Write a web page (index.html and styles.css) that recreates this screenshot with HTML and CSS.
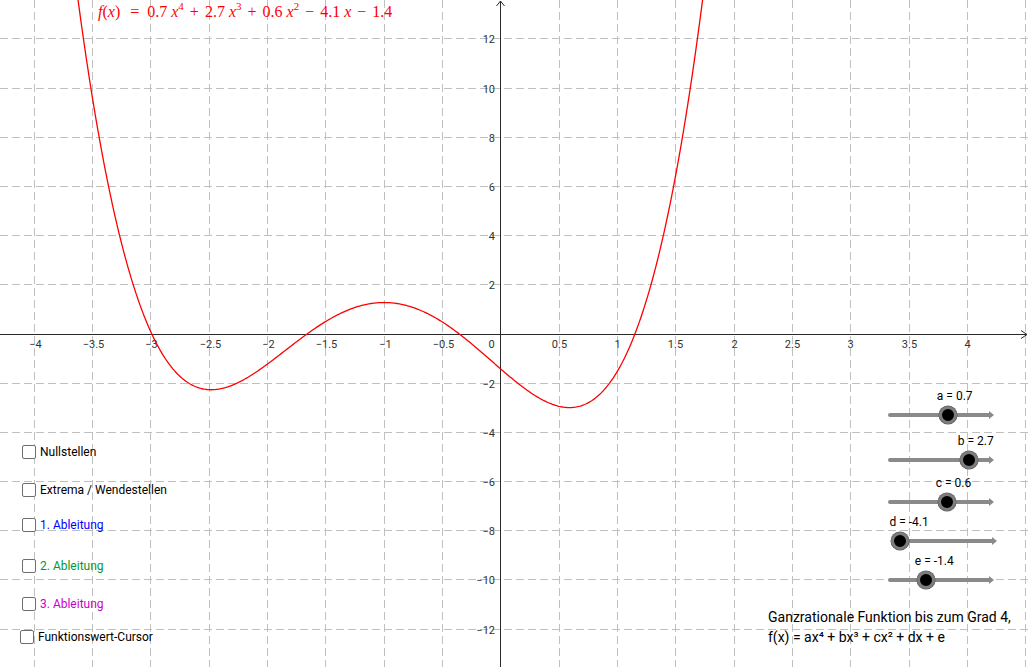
FILE: index.html
```html
<!DOCTYPE html>
<html lang="de">
<head>
<meta charset="utf-8">
<title>Ganzrationale Funktion</title>
<link rel="stylesheet" href="styles.css">
</head>
<body>
<div class="applet">
  <svg class="graph" width="1030" height="667" viewBox="0 0 1030 667">
    <g class="grid">
      <line x1="34.5" y1="0" x2="34.5" y2="667"/>
      <line x1="92.5" y1="0" x2="92.5" y2="667"/>
      <line x1="150.5" y1="0" x2="150.5" y2="667"/>
      <line x1="209.5" y1="0" x2="209.5" y2="667"/>
      <line x1="267.5" y1="0" x2="267.5" y2="667"/>
      <line x1="325.5" y1="0" x2="325.5" y2="667"/>
      <line x1="384.5" y1="0" x2="384.5" y2="667"/>
      <line x1="442.5" y1="0" x2="442.5" y2="667"/>
      <line x1="559.5" y1="0" x2="559.5" y2="667"/>
      <line x1="617.5" y1="0" x2="617.5" y2="667"/>
      <line x1="675.5" y1="0" x2="675.5" y2="667"/>
      <line x1="734.5" y1="0" x2="734.5" y2="667"/>
      <line x1="792.5" y1="0" x2="792.5" y2="667"/>
      <line x1="850.5" y1="0" x2="850.5" y2="667"/>
      <line x1="909.5" y1="0" x2="909.5" y2="667"/>
      <line x1="967.5" y1="0" x2="967.5" y2="667"/>
      <line x1="1025.5" y1="0" x2="1025.5" y2="667"/>
      <line x1="0" y1="38.5" x2="1030" y2="38.5"/>
      <line x1="0" y1="88.5" x2="1030" y2="88.5"/>
      <line x1="0" y1="137.5" x2="1030" y2="137.5"/>
      <line x1="0" y1="186.5" x2="1030" y2="186.5"/>
      <line x1="0" y1="235.5" x2="1030" y2="235.5"/>
      <line x1="0" y1="284.5" x2="1030" y2="284.5"/>
      <line x1="0" y1="383.5" x2="1030" y2="383.5"/>
      <line x1="0" y1="432.5" x2="1030" y2="432.5"/>
      <line x1="0" y1="481.5" x2="1030" y2="481.5"/>
      <line x1="0" y1="530.5" x2="1030" y2="530.5"/>
      <line x1="0" y1="579.5" x2="1030" y2="579.5"/>
      <line x1="0" y1="629.5" x2="1030" y2="629.5"/>
    </g>
    <g class="axes">
      <line x1="0" y1="334.5" x2="1027" y2="334.5"/>
      <polyline points="1021,330.5 1027,334.5 1021,338.5"/>
      <line x1="500.5" y1="667" x2="500.5" y2="1"/>
      <polyline points="496.5,6 500.5,1 504.5,6"/>
    </g>
    <g class="labels-x">
      <text x="35.5" y="348">−4</text>
      <text x="93.5" y="348">−3.5</text>
      <text x="151.5" y="348">−3</text>
      <text x="210.5" y="348">−2.5</text>
      <text x="268.5" y="348">−2</text>
      <text x="326.5" y="348">−1.5</text>
      <text x="385.5" y="348">−1</text>
      <text x="443.5" y="348">−0.5</text>
      <text x="491.5" y="348">0</text>
      <text x="559.5" y="348">0.5</text>
      <text x="617.5" y="348">1</text>
      <text x="675.5" y="348">1.5</text>
      <text x="734.5" y="348">2</text>
      <text x="792.5" y="348">2.5</text>
      <text x="850.5" y="348">3</text>
      <text x="909.5" y="348">3.5</text>
      <text x="967.5" y="348">4</text>
    </g>
    <g class="labels-y">
      <text x="495" y="42.5">12</text>
      <text x="495" y="92.5">10</text>
      <text x="495" y="141.5">8</text>
      <text x="495" y="190.5">6</text>
      <text x="495" y="239.5">4</text>
      <text x="495" y="288.5">2</text>
      <text x="495" y="387.5">−2</text>
      <text x="495" y="436.5">−4</text>
      <text x="495" y="485.5">−6</text>
      <text x="495" y="534.5">−8</text>
      <text x="495" y="583.5">−10</text>
      <text x="495" y="633.5">−12</text>
    </g>
    <path id="curve" class="curve" d=""/>
  </svg>

  <div class="formula"><i>f</i>(<i>x</i>)<span class="op op-eq">=</span>0.7 <i>x</i><sup>4</sup><span class="op">+</span>2.7 <i>x</i><sup>3</sup><span class="op">+</span>0.6 <i>x</i><sup>2</sup><span class="op">−</span>4.1 <i>x</i><span class="op">−</span>1.4</div>

  <ul class="toggles">
    <li class="toggle"><span class="box"></span><span>Nullstellen</span></li>
    <li class="toggle toggle-2"><span class="box"></span><span>Extrema / Wendestellen</span></li>
    <li class="toggle toggle-3 blue"><span class="box"></span><span>1. Ableitung</span></li>
    <li class="toggle toggle-4 green"><span class="box"></span><span>2. Ableitung</span></li>
    <li class="toggle toggle-5 magenta"><span class="box"></span><span>3. Ableitung</span></li>
    <li class="toggle toggle-6"><span class="box"></span><span>Funktionswert-Cursor</span></li>
  </ul>

  <div class="sliders">
    <div class="slider" style="--p:0.57"><span class="slider-label">a = 0.7</span><div class="track-wrap"><span class="track"></span><span class="knob"></span></div></div>
    <div class="slider slider-b" style="--p:0.77"><span class="slider-label">b = 2.7</span><div class="track-wrap"><span class="track"></span><span class="knob"></span></div></div>
    <div class="slider slider-c" style="--p:0.56"><span class="slider-label">c = 0.6</span><div class="track-wrap"><span class="track"></span><span class="knob"></span></div></div>
    <div class="slider slider-d" style="--p:0.09"><span class="slider-label">d = -4.1</span><div class="track-wrap"><span class="track"></span><span class="knob"></span></div></div>
    <div class="slider slider-e" style="--p:0.36"><span class="slider-label">e = -1.4</span><div class="track-wrap"><span class="track"></span><span class="knob"></span></div></div>
  </div>

  <p class="caption">Ganzrationale Funktion bis zum Grad 4,<br>f(x) = ax⁴ + bx³ + cx² + dx + e</p>
</div>
<script src="script.js"></script>
</body>
</html>
```

FILE: styles.css
```css
html, body {
  margin: 0;
  padding: 0;
  background: #ffffff;
}

.applet {
  position: relative;
  width: 1030px;
  height: 667px;
  overflow: hidden;
  background: #ffffff;
  font-family: Roboto, "Liberation Sans", sans-serif;
  color: #000;
}

.graph {
  display: block;
}

.grid line {
  stroke: #c0c0c0;
  stroke-width: 1;
  stroke-dasharray: 8 4;
}

.axes line,
.axes polyline {
  stroke: #2a2a2a;
  stroke-width: 1;
  fill: none;
}

.labels-x text,
.labels-y text {
  font-family: Roboto, "Liberation Sans", sans-serif;
  font-size: 11px;
  fill: #333333;
}

.labels-x text {
  text-anchor: middle;
}

.labels-y text {
  text-anchor: end;
}

.curve {
  fill: none;
  stroke: #ff0000;
  stroke-width: 1.3;
  stroke-linejoin: round;
}

/* Function label */
.formula {
  position: absolute;
  left: 98px;
  top: 1px;
  font-family: "Liberation Serif", "DejaVu Serif", serif;
  font-size: 16px;
  line-height: 22px;
  color: #ff0000;
  white-space: nowrap;
}

.formula sup {
  font-size: 11px;
  line-height: 0;
  vertical-align: 7px;
}

.formula .op {
  margin: 0 6px;
}

.formula .op-eq {
  margin: 0 8px 0 10px;
}

/* Check boxes */
.toggles {
  position: absolute;
  left: 22px;
  top: 442px;
  margin: 0;
  padding: 0;
  list-style: none;
  display: flex;
  flex-direction: column;
  font-size: 12px;
}

.toggle {
  display: flex;
  align-items: center;
  gap: 4px;
  height: 20px;
  white-space: nowrap;
}

.toggle-2 { margin-top: 18px; }
.toggle-3 { margin-top: 15px; }
.toggle-4 { margin-top: 21px; }
.toggle-5 { margin-top: 18px; }
.toggle-6 { margin-top: 13px; margin-left: -2px; }

.box {
  width: 14px;
  height: 14px;
  box-sizing: border-box;
  border: 1.5px solid #6e6e6e;
  border-radius: 2px;
  background: #ffffff;
  flex: none;
}

.blue { color: #0000ff; }
.green { color: #009933; }
.magenta { color: #cc00cc; }

/* Sliders */
.sliders {
  position: absolute;
  left: 888px;
  top: 389px;
  width: 130px;
  display: flex;
  flex-direction: column;
}

.slider {
  display: flex;
  flex-direction: column;
  height: 35px;
}

.slider-b { margin-top: 10px; }
.slider-c { margin-top: 7px; }
.slider-d { margin-top: 4px; margin-left: 3px; }
.slider-e { margin-top: 4px; }

.slider-label {
  display: block;
  margin-left: calc(var(--p) * 105px - 11px);
  font-size: 12px;
  line-height: 14px;
  white-space: nowrap;
}

.track-wrap {
  position: relative;
  margin-top: 3px;
  height: 18px;
  width: 110px;
  display: flex;
  align-items: center;
}

.track {
  display: block;
  width: 101px;
  height: 4px;
  border-radius: 2px 0 0 2px;
  background: #8a8a8a;
}

.track::after {
  content: "";
  display: block;
  position: relative;
  left: 101px;
  top: -2px;
  width: 0;
  height: 0;
  border-left: 5px solid #8a8a8a;
  border-top: 4px solid transparent;
  border-bottom: 4px solid transparent;
}

.knob {
  position: absolute;
  top: 0;
  left: calc(var(--p) * 105px - 9px);
  width: 18px;
  height: 18px;
  box-sizing: border-box;
  border-radius: 50%;
  background: #000000;
  border: 3px solid #7d7d7d;
  box-shadow: 0 0 0 0.5px #555;
}

/* Caption */
.caption {
  position: absolute;
  left: 768px;
  top: 607px;
  margin: 0;
  font-size: 14px;
  line-height: 20px;
  white-space: nowrap;
}
```

FILE: script.js
```js
(function () {
  var ox = 500.7, oy = 334.5, sx = 116.6, sy = 24.6;
  function f(x) {
    return 0.7 * x * x * x * x + 2.7 * x * x * x + 0.6 * x * x - 4.1 * x - 1.4;
  }
  var d = '';
  for (var i = 0; i <= 560; i++) {
    var x = -3.75 + i * 0.01;
    var X = ox + sx * x;
    var Y = oy - sy * f(x);
    d += (i ? 'L' : 'M') + X.toFixed(2) + ' ' + Y.toFixed(2);
  }
  document.getElementById('curve').setAttribute('d', d);
})();
```
